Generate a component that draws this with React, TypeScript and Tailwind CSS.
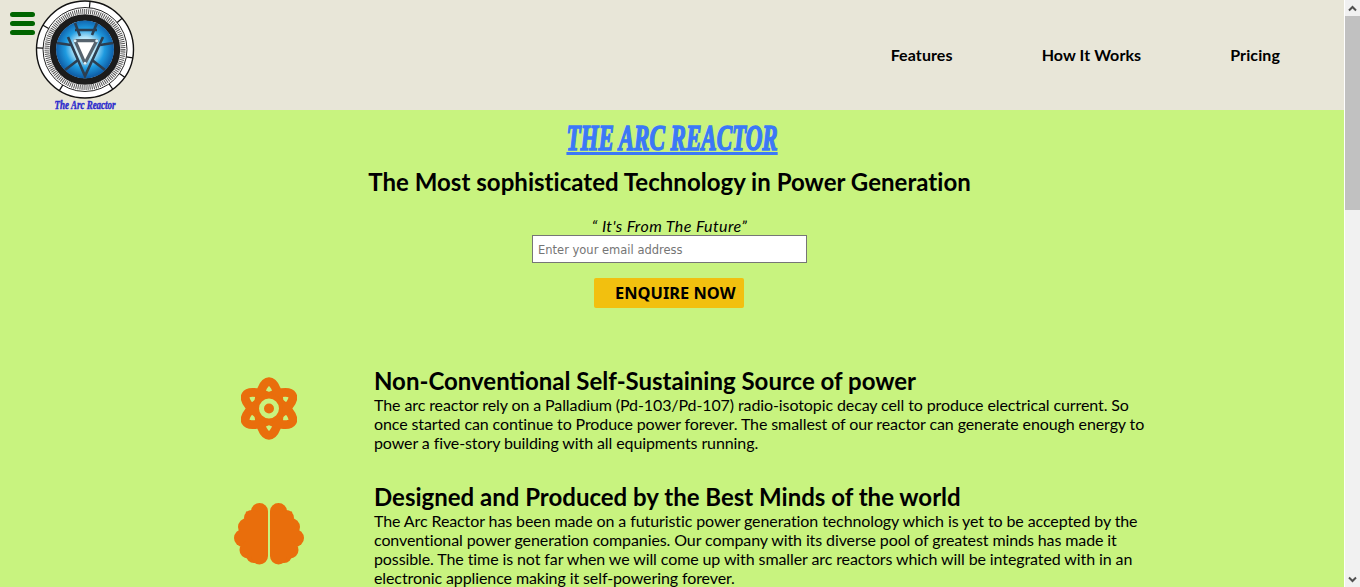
const features = [
  {
    icon: 'atom',
    title: 'Non-Conventional Self-Sustaining Source of power',
    text: 'The arc reactor rely on a Palladium (Pd-103/Pd-107) radio-isotopic decay cell to produce electrical current. So once started can continue to Produce power forever. The smallest of our reactor can generate enough energy to power a five-story building with all equipments running.',
  },
  {
    icon: 'brain',
    title: 'Designed and Produced by the Best Minds of the world',
    text: 'The Arc Reactor has been made on a futuristic power generation technology which is yet to be accepted by the conventional power generation companies. Our company with its diverse pool of greatest minds has made it possible. The time is not far when we will come up with smaller arc reactors which will be integrated with in an electronic applience making it self-powering forever.',
  },
];

function ReactorLogo() {
  const ticks = [6, 50, 100, 125, 145, 212, 272, 300];
  return (
    <svg width="100" height="100" viewBox="0 0 100 100" className="block">
      <defs>
        <radialGradient id="core" cx="50%" cy="48%" r="50%">
          <stop offset="0%" stopColor="#ffffff" />
          <stop offset="38%" stopColor="#b5e6fa" />
          <stop offset="68%" stopColor="#1f9be0" />
          <stop offset="100%" stopColor="#0f5fa8" />
        </radialGradient>
      </defs>
      <circle cx="50" cy="49.5" r="48.5" fill="#fff" stroke="#111" strokeWidth="1.4" />
      <circle cx="50" cy="49.5" r="42" fill="#fff" stroke="#222" strokeWidth="1" />
      {ticks.map((a) => (
        <line key={a} x1="50" y1="7.5" x2="50" y2="1" stroke="#111" strokeWidth="1.2" transform={`rotate(${a} 50 49.5)`} />
      ))}
      <circle cx="50" cy="49.5" r="38" fill="none" stroke="#555" strokeWidth="5" strokeDasharray="1 1" />
      <circle cx="50" cy="49.5" r="32" fill="none" stroke="#1c1c1c" strokeWidth="6.5" />
      <circle cx="50" cy="49.5" r="29" fill="url(#core)" />
      <g stroke="#2c3e50" strokeWidth="2.6" fill="none">
        <path d="M40 23 L45 36 M62 23 L57 35 M40 30 L62 30" />
        <path d="M22 43 L36 45 M78 43 L65 45" />
        <path d="M30 70 L43 60 M70 70 L57 60" />
        <path d="M33 37 L50 76 L68 37" />
      </g>
      <path d="M40 40.7 L61.7 40.7 L50 63.3 Z" fill="#ffffff" stroke="#56636e" strokeWidth="3.2" strokeLinejoin="round" />
      <circle cx="40" cy="40.7" r="1.5" fill="#d8eef8" />
      <circle cx="61.7" cy="40.7" r="1.5" fill="#d8eef8" />
      <circle cx="50" cy="63.3" r="1.5" fill="#d8eef8" />
    </svg>
  );
}

function AtomIcon() {
  return (
    <svg width="56" height="63" viewBox="0 0 56 63" className="block">
      <g fill="none" stroke="#e96e0c" strokeWidth="8.8">
        <ellipse cx="28" cy="31.5" rx="10.5" ry="26.8" />
        <ellipse cx="28" cy="31.5" rx="10.5" ry="26.8" transform="rotate(60 28 31.5)" />
        <ellipse cx="28" cy="31.5" rx="10.5" ry="26.8" transform="rotate(-60 28 31.5)" />
      </g>
      <circle cx="28" cy="31.5" r="14" fill="#e96e0c" />
      <circle cx="28" cy="31.5" r="7.5" fill="none" stroke="#c8f37f" strokeWidth="5" />
    </svg>
  );
}

function BrainIcon() {
  const half = (
    <g fill="#e96e0c">
      <circle cx="25.5" cy="8.5" r="8.5" />
      <circle cx="18" cy="15" r="8" />
      <circle cx="13" cy="24" r="9" />
      <circle cx="9" cy="35" r="9" />
      <circle cx="14" cy="47" r="8.5" />
      <circle cx="20" cy="52" r="8" />
      <circle cx="25.5" cy="53" r="8.5" />
      <rect x="12" y="8.5" width="22" height="44.5" />
    </g>
  );
  return (
    <svg width="70" height="62" viewBox="0 0 70 62" className="block">
      {half}
      <g transform="matrix(-1 0 0 1 70 0)">{half}</g>
    </svg>
  );
}

export default function App() {
  return (
    <div className="flex h-[587px] w-[1360px] overflow-hidden bg-white font-['Lato',sans-serif] text-black">
      <main className="h-full w-[1344px] overflow-hidden bg-[#c8f37f]">
        <header className="relative flex h-[110px] items-start bg-[#e8e6d8]">
          <div className="ml-[10px] mt-[12px] flex w-[25px] flex-col gap-[4px]">
            <span className="h-[5px] rounded-full bg-[#006400]" />
            <span className="h-[5px] rounded-full bg-[#006400]" />
            <span className="h-[5px] rounded-full bg-[#006400]" />
          </div>
          <div className="flex flex-col items-center">
            <ReactorLogo />
            <span className="scale-x-[0.78] font-['Liberation_Serif',serif] text-[11.5px] leading-[11px] font-bold whitespace-nowrap italic text-[#2a2acc] [-webkit-text-stroke:0.4px_#2a2acc]">The Arc Reactor</span>
          </div>
          <nav className="ml-auto mr-[64px] mt-[45px] flex gap-[89px] text-base leading-[20px] font-bold tracking-[0.1px]">
            <a>Features</a>
            <a>How It Works</a>
            <a>Pricing</a>
          </nav>
        </header>

        <section className="flex flex-col items-center pr-[5px]">
          <h1 className="ml-[5px] mt-[7px] scale-x-[0.64] font-['Liberation_Serif',serif] text-[36px] leading-[42px] font-bold whitespace-nowrap italic text-[#3b78f7] underline [-webkit-text-stroke:1.6px_#3b78f7]">THE ARC REACTOR</h1>
          <h2 className="mt-[9px] text-2xl leading-[28px] font-bold tracking-[0.03px]">The Most sophisticated Technology in Power Generation</h2>
          <p className="mt-[20px] text-base leading-[19px] tracking-[0.4px] italic">“ It's From The Future”</p>
          <input
            placeholder="Enter your email address"
            className="h-[28px] w-[275px] border border-[#767676] bg-white px-[5px] pt-[1px] font-['DejaVu_Sans',sans-serif] text-[11.5px] placeholder:text-[#757575]"
          />
          <button className="mt-[15px] mr-[2px] flex h-[30px] w-[150px] items-center justify-end rounded-[2px] bg-[#f2c00f] pr-[8px] font-['Noto_Sans',sans-serif] text-[16.4px] font-bold">ENQUIRE NOW</button>
        </section>

        <section className="mt-[58px] flex flex-col gap-[30px] pl-[194px]">
          {features.map((f) => (
            <div key={f.title} className="flex">
              <div className="flex w-[180px] shrink-0 items-center justify-center pr-[30px] pb-[2px]">
                {f.icon === 'atom' ? <AtomIcon /> : <BrainIcon />}
              </div>
              <div className="w-[776px]">
                <h3 className="text-2xl leading-[29px] font-bold">{f.title}</h3>
                <p className="text-base leading-[19px] tracking-[-0.1px]">{f.text}</p>
              </div>
            </div>
          ))}
        </section>
      </main>

      <aside className="ml-[1px] flex h-full w-[15px] flex-col bg-[#f1f1f1]">
        <div className="flex h-[16px] items-center justify-center">
          <svg width="9" height="7" viewBox="0 0 9 7"><path d="M1 5.5 L4.5 2 L8 5.5" fill="none" stroke="#505050" strokeWidth="2" /></svg>
        </div>
        <div className="h-[194px] bg-[#c1c1c1]" />
        <div className="flex-1" />
        <div className="flex h-[16px] items-center justify-center">
          <svg width="9" height="7" viewBox="0 0 9 7"><path d="M1 1.5 L4.5 5 L8 1.5" fill="none" stroke="#505050" strokeWidth="2" /></svg>
        </div>
      </aside>
    </div>
  );
}
